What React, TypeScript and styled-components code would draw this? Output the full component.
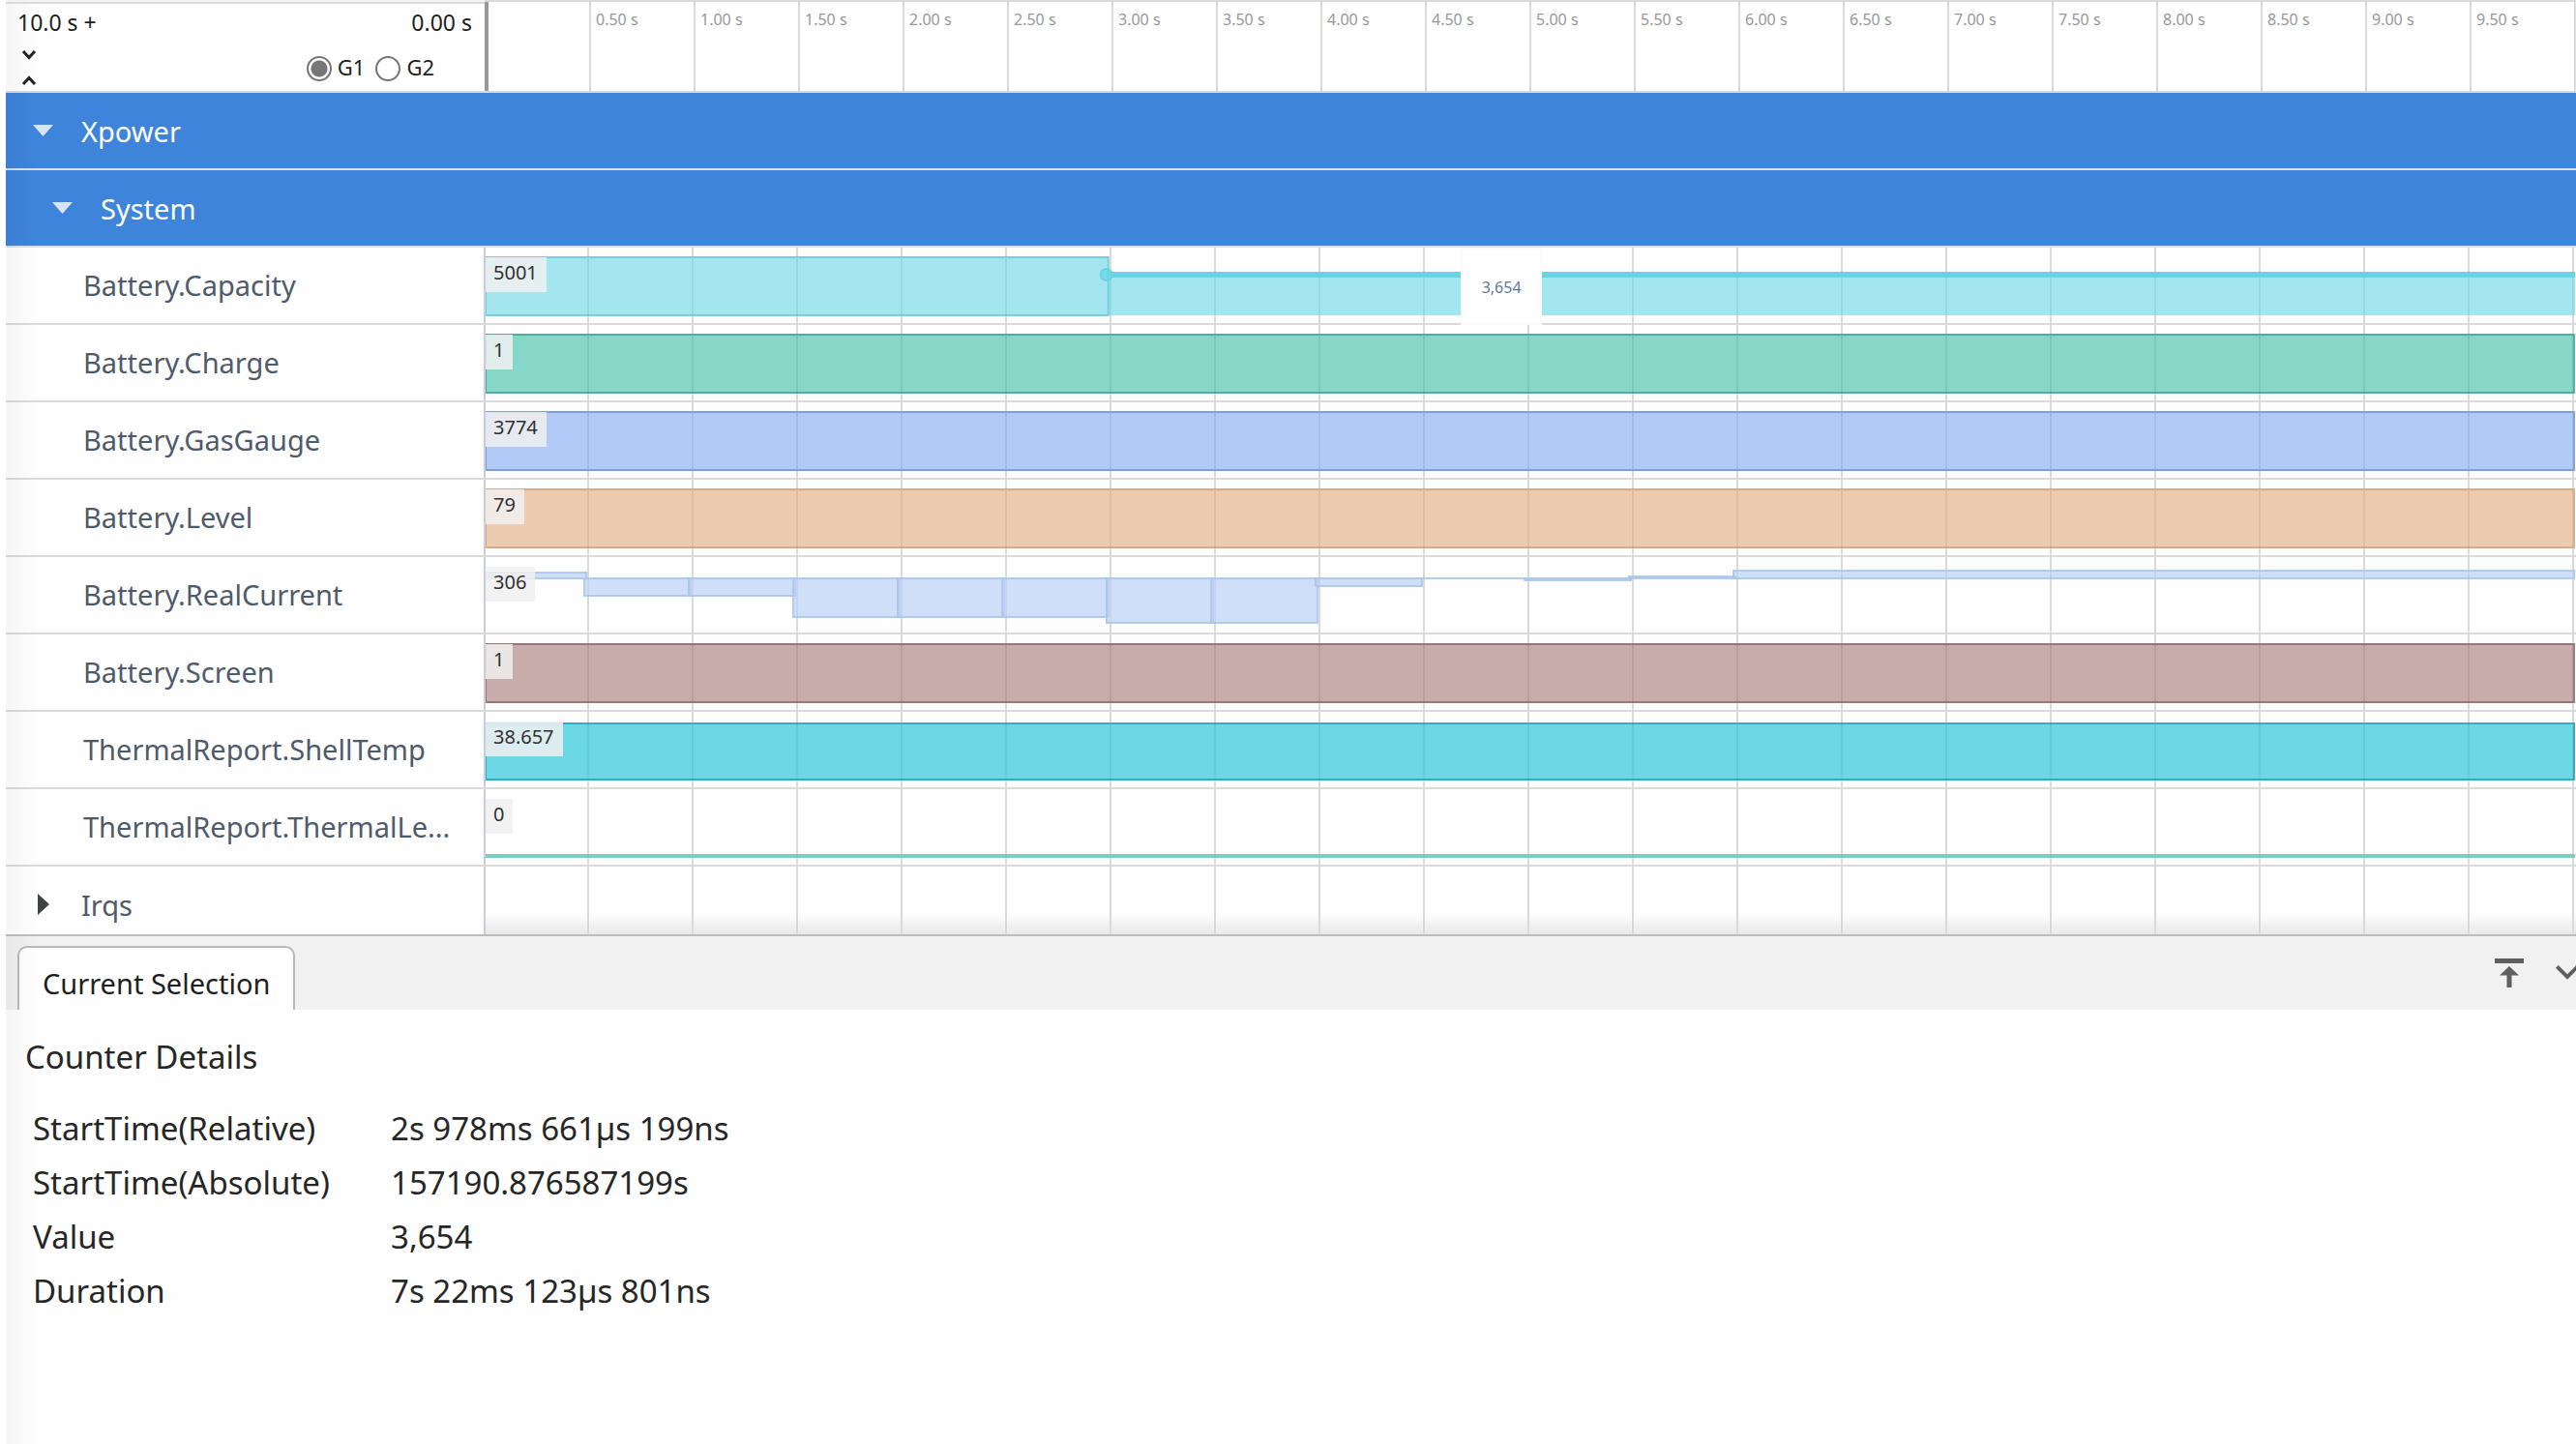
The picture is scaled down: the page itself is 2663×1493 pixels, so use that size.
import React from "react";
import styled, { createGlobalStyle } from "styled-components";

const LINE = "#dadada";
const LABEL_WIDTH = 494;

const GlobalStyle = createGlobalStyle`
  *, *::before, *::after { box-sizing: border-box; }
  body {
    margin: 0;
    background: #fefefe;
    color: #262626;
    font-family: "Noto Sans", "Open Sans", sans-serif;
  }
  button {
    margin: 0;
    padding: 0;
    border: 0;
    background: none;
    color: inherit;
    font: inherit;
    cursor: pointer;
  }
  svg { display: block; }
`;

const Page = styled.main`
  position: relative;
  display: flex;
  flex-direction: column;
  min-height: 100vh;
  padding-left: 6px;
  overflow: hidden;
`;

const EdgeShade = styled.div`
  position: absolute;
  top: 4px;
  bottom: 0;
  left: 6px;
  width: 32px;
  background: linear-gradient(to right, rgba(0, 0, 0, 0.035), rgba(0, 0, 0, 0));
  pointer-events: none;
`;

/* ---------- time axis ---------- */

const Header = styled.header`
  display: flex;
  height: 96px;
  border-bottom: 2px solid ${LINE};
`;

const Controls = styled.div`
  flex: none;
  width: ${LABEL_WIDTH + 1}px;
  border-top: 2px solid #f4f4f4;
  font-size: 23px;
  color: #1f1f1f;
`;

const RangeLine = styled.div`
  display: flex;
  justify-content: space-between;
  padding: 0 13px 0 12px;
  border-top: 2px solid ${LINE};
  line-height: 38px;
`;

const OptionsLine = styled.div`
  display: flex;
  justify-content: space-between;
  padding: 2px 52px 0 16px;
`;

const Steppers = styled.div`
  display: flex;
  flex-direction: column;
  gap: 1px;
`;

const StepButton = styled.button`
  display: grid;
  place-items: center;
  width: 16px;
  height: 25px;
`;

const RadioGroup = styled.div`
  display: flex;
  align-items: center;
  gap: 11px;
  padding-top: 2px;
`;

const RadioLabel = styled.label`
  display: flex;
  align-items: center;
  gap: 6px;
  font-size: 22px;
  line-height: 26px;
`;

const RadioText = styled.span`
  padding-bottom: 4px;
`;

const Radio = styled.input`
  appearance: none;
  width: 26px;
  height: 26px;
  margin: 0;
  border: 2px solid #767676;
  border-radius: 50%;
  background: #fff;
  &:checked {
    background: radial-gradient(circle, #767676 8px, #fff 9px);
  }
`;

const Ruler = styled.div`
  display: flex;
  flex: 1;
  min-width: 0;
  border-top: 2px solid ${LINE};
  border-right: 2px solid ${LINE};
`;

const Tick = styled.div<{ $origin?: boolean }>`
  flex: none;
  width: 5%;
  padding-left: 5px;
  border-left: ${(p) => (p.$origin ? "4px solid #999" : `2px solid ${LINE}`)};
  color: #999;
  font-size: 16px;
  line-height: 36px;
  white-space: nowrap;
`;

/* ---------- tracks ---------- */

const GroupRow = styled.button<{ $level: number }>`
  display: flex;
  align-items: center;
  gap: 29px;
  width: 100%;
  height: 80px;
  padding-left: ${(p) => 28 + p.$level * 20}px;
  border-bottom: 2px solid #d9e1ee;
  background: #3e84da;
  color: #fff;
  font-size: 29px;
  text-align: left;
`;

const Row = styled.div<{ $short?: boolean }>`
  display: flex;
  height: ${(p) => (p.$short ? 70 : 80)}px;
  border-bottom: ${(p) => (p.$short ? "0" : `2px solid ${LINE}`)};
`;

const RowLabel = styled.div`
  flex: none;
  width: ${LABEL_WIDTH}px;
  padding-left: 80px;
  overflow: hidden;
  color: #4f5a6a;
  font-size: 29px;
  line-height: 78px;
  white-space: nowrap;
`;

const RowToggle = styled.button`
  display: flex;
  flex: none;
  align-items: center;
  gap: 33px;
  width: ${LABEL_WIDTH}px;
  height: 78px;
  padding-left: 33px;
  color: #4f5a6a;
  font-size: 29px;
`;

const Track = styled.div<{ $shaded?: boolean }>`
  position: relative;
  flex: 1;
  min-width: 0;
  padding-right: 3px;
  background: ${(p) =>
    p.$shaded ? "linear-gradient(to top, #e9e9e9, rgba(254, 254, 254, 0) 22px)" : "none"};
`;

const Plot = styled.svg`
  width: 100%;
  height: 100%;
  overflow: visible;
`;

const Badge = styled.span`
  position: absolute;
  top: 10px;
  left: 2px;
  padding: 0 9px 4px 8px;
  background: rgba(240, 240, 240, 0.86);
  color: #303030;
  font-size: 20px;
  line-height: 32px;
`;

const ValueTip = styled.div`
  position: absolute;
  top: 0;
  left: 46.7%;
  z-index: 1;
  width: 84px;
  height: 80px;
  border: 2px solid #fbfbfb;
  background: #fff;
  color: #5d7b9b;
  font-size: 16px;
  line-height: 78px;
  text-align: center;
`;

/* ---------- details panel ---------- */

const TabBar = styled.div`
  display: flex;
  align-items: flex-end;
  justify-content: space-between;
  height: 78px;
  padding-left: 12px;
  border-top: 2px solid #bdbdbd;
  background: #f1f1f1;
`;

const Tab = styled.button`
  height: 66px;
  padding: 9px 24px 0;
  border: 2px solid #b8b8b8;
  border-bottom: 0;
  border-radius: 10px 10px 0 0;
  background: #fefefe;
  color: #1f1f1f;
  font-size: 29px;
`;

const PanelActions = styled.div`
  display: flex;
  align-self: flex-start;
  gap: 33px;
  padding-top: 23px;
  color: #606060;
`;

const Details = styled.section`
  flex: 1;
  padding: 25px 20px;
`;

const DetailsTitle = styled.h2`
  margin: 0 0 22px;
  font-size: 33px;
  font-weight: 400;
  line-height: 48px;
`;

const DetailsTable = styled.table`
  border-collapse: collapse;
  font-size: 33px;
  line-height: 56px;
  white-space: nowrap;
  th, td {
    padding: 0 8px;
    font-weight: 400;
    text-align: left;
  }
  th { width: 370px; }
`;

const SECONDS = 10;
const at = (t: number) => `${(t / SECONDS) * 100}%`;
const TICKS = Array.from({ length: 20 }, (_, i) => i / 2);

const GridLines = () => (
  <g>
    {Array.from({ length: 20 }, (_, i) => (
      <line key={i} x1={at((i + 1) / 2)} x2={at((i + 1) / 2)} y1="0" y2="100%" stroke={LINE} strokeWidth="2" />
    ))}
  </g>
);

const AxisLine = () => <rect x="0" y="0" width="2" height="100%" fill="#c9ced9" />;

type Paint = { fill: string; stroke: string };

const FullBar = ({ fill, stroke, top = 10 }: Paint & { top?: number }) => (
  <rect x="2" y={top} width="99.95%" height={70 - top} fill={fill} stroke={stroke} strokeWidth="2" />
);

const CapacityPlot = () => (
  <g>
    <rect x="2" y="10" width="29.8%" height="60" fill="rgba(108,215,229,.62)" stroke="#78cedb" strokeWidth="2" />
    <rect x="29.9%" y="25" width="70.2%" height="45" fill="rgba(108,215,229,.62)" />
    <rect x="29.9%" y="25" width="70.2%" height="6" fill="#6bd2e2" />
    <circle cx="29.8%" cy="28" r="6" fill="rgba(108,215,229,.8)" stroke="#6bd2e2" strokeWidth="2" />
  </g>
);

/* start and length in seconds, top and bottom inside the row */
const CURRENT: [number, number, number, number][] = [
  [0.009, 0.482, 16, 22],
  [0.4815, 0.509, 22, 40],
  [0.9815, 0.509, 22, 40],
  [1.4815, 0.509, 22, 62],
  [1.9815, 0.509, 22, 62],
  [2.4815, 0.509, 22, 62],
  [2.9815, 0.509, 22, 68],
  [3.4815, 0.509, 22, 68],
  [3.9815, 0.509, 22, 30],
  [4.4815, 0.509, 22, 22],
  [4.9815, 0.509, 22, 24],
  [5.4815, 0.509, 20, 22],
  [5.9815, 4.024, 14, 22],
];

const CurrentPlot = () => (
  <g fill="rgba(187,210,244,.7)" stroke="rgba(168,197,236,.85)" strokeWidth="2">
    {CURRENT.map(([t, d, top, bottom]) =>
      top === bottom ? (
        <line key={t} x1={at(t)} x2={at(t + d)} y1={top} y2={top} />
      ) : (
        <rect key={t} x={at(t)} width={at(d)} y={top} height={bottom - top} />
      )
    )}
  </g>
);

const TRACKS: { name: string; value: string; plot: React.ReactNode; tip?: string }[] = [
  { name: "Battery.Capacity", value: "5001", plot: <CapacityPlot />, tip: "3,654" },
  { name: "Battery.Charge", value: "1", plot: <FullBar fill="rgba(60,190,165,.62)" stroke="#4fae9f" /> },
  { name: "Battery.GasGauge", value: "3774", plot: <FullBar fill="rgba(130,169,243,.62)" stroke="#819fdf" /> },
  { name: "Battery.Level", value: "79", plot: <FullBar fill="rgba(226,171,127,.62)" stroke="#d9aa87" /> },
  { name: "Battery.RealCurrent", value: "306", plot: <CurrentPlot /> },
  { name: "Battery.Screen", value: "1", plot: <FullBar fill="rgba(166,121,121,.62)" stroke="#987876" /> },
  {
    name: "ThermalReport.ShellTemp",
    value: "38.657",
    plot: <FullBar fill="rgba(42,198,218,.69)" stroke="#2daec2" top={12} />,
  },
  {
    name: "ThermalReport.ThermalLe...",
    value: "0",
    plot: <rect x="2" y="67" width="100%" height="4" fill="#7fccbe" />,
  },
];

const DETAILS = [
  ["StartTime(Relative)", "2s 978ms 661µs 199ns"],
  ["StartTime(Absolute)", "157190.876587199s"],
  ["Value", "3,654"],
  ["Duration", "7s 22ms 123µs 801ns"],
];

const Chevron = ({ up }: { up?: boolean }) => (
  <svg width="16" height="10" viewBox="0 0 16 10" fill="none" stroke="#222" strokeWidth="3">
    <path d={up ? "M2 9 8 2.5 14 9" : "M2 1 8 7.5 14 1"} />
  </svg>
);

const Caret = () => (
  <svg width="21" height="12" viewBox="0 0 21 12" fill="#d6e5f8">
    <path d="M0 0h21L10.5 12z" />
  </svg>
);

export default function App() {
  return (
    <>
      <GlobalStyle />
      <Page>
        <Header>
          <Controls>
            <RangeLine>
              <span>10.0 s +</span>
              <span>0.00 s</span>
            </RangeLine>
            <OptionsLine>
              <Steppers>
                <StepButton aria-label="Expand all">
                  <Chevron />
                </StepButton>
                <StepButton aria-label="Collapse all">
                  <Chevron up />
                </StepButton>
              </Steppers>
              <RadioGroup role="radiogroup">
                <RadioLabel>
                  <Radio type="radio" name="group" defaultChecked />
                  <RadioText>G1</RadioText>
                </RadioLabel>
                <RadioLabel>
                  <Radio type="radio" name="group" />
                  <RadioText>G2</RadioText>
                </RadioLabel>
              </RadioGroup>
            </OptionsLine>
          </Controls>
          <Ruler>
            {TICKS.map((t) => (
              <Tick key={t} $origin={t === 0}>
                {t > 0 && `${t.toFixed(2)} s`}
              </Tick>
            ))}
          </Ruler>
        </Header>

        <GroupRow $level={0} aria-expanded="true">
          <Caret />
          Xpower
        </GroupRow>
        <GroupRow $level={1} aria-expanded="true">
          <Caret />
          System
        </GroupRow>

        {TRACKS.map((track) => (
          <Row key={track.name}>
            <RowLabel>{track.name}</RowLabel>
            <Track>
              <Plot>
                <GridLines />
                {track.plot}
                <AxisLine />
              </Plot>
              <Badge>{track.value}</Badge>
              {track.tip && <ValueTip>{track.tip}</ValueTip>}
            </Track>
          </Row>
        ))}
        <Row $short>
          <RowToggle aria-expanded="false">
            <svg width="12" height="22" viewBox="0 0 12 22" fill="#404346">
              <path d="M0 0 12 11 0 22z" />
            </svg>
            Irqs
          </RowToggle>
          <Track $shaded>
            <Plot>
              <GridLines />
              <AxisLine />
            </Plot>
          </Track>
        </Row>

        <TabBar>
          <Tab>Current Selection</Tab>
          <PanelActions>
            <button aria-label="Maximize panel">
              <svg width="30" height="30" viewBox="0 0 30 30" fill="currentColor">
                <path d="M0 0h30v5H0zM15 8l10 9.500h-7.500V30h-5V17.500H5z" />
              </svg>
            </button>
            <button aria-label="Collapse panel">
              <svg width="21" height="30" viewBox="0 0 21 30" fill="currentColor">
                <path d="M2.800 7 12 16.200 21.200 7 24 9.800l-12 12-12-12z" />
              </svg>
            </button>
          </PanelActions>
        </TabBar>
        <Details>
          <DetailsTitle>Counter Details</DetailsTitle>
          <DetailsTable>
            <tbody>
              {DETAILS.map(([name, value]) => (
                <tr key={name}>
                  <th scope="row">{name}</th>
                  <td>{value}</td>
                </tr>
              ))}
            </tbody>
          </DetailsTable>
        </Details>
        <EdgeShade />
      </Page>
    </>
  );
}
